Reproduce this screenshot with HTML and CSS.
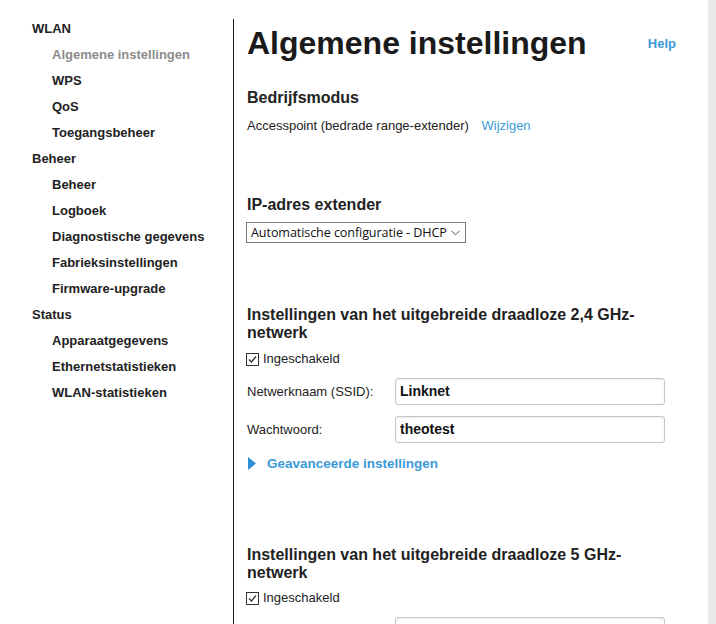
FILE: index.html
```html
<!DOCTYPE html>
<html lang="nl">
<head>
<meta charset="utf-8">
<title>Algemene instellingen</title>
<link rel="stylesheet" href="styles.css">
</head>
<body>
<div class="page">
  <nav class="sidebar">
    <div class="group">WLAN</div>
    <a class="item active">Algemene instellingen</a>
    <a class="item">WPS</a>
    <a class="item">QoS</a>
    <a class="item">Toegangsbeheer</a>
    <div class="group">Beheer</div>
    <a class="item">Beheer</a>
    <a class="item">Logboek</a>
    <a class="item">Diagnostische gegevens</a>
    <a class="item">Fabrieksinstellingen</a>
    <a class="item">Firmware-upgrade</a>
    <div class="group">Status</div>
    <a class="item">Apparaatgegevens</a>
    <a class="item">Ethernetstatistieken</a>
    <a class="item">WLAN-statistieken</a>
  </nav>
  <main class="main">
    <div class="content">
      <div class="title-row">
        <h1 class="title">Algemene instellingen</h1>
        <a class="help link">Help</a>
      </div>

      <section class="sec-mode">
        <h2 class="heading">Bedrijfsmodus</h2>
        <p class="text">Accesspoint (bedrade range-extender) <a class="link change">Wijzigen</a></p>
      </section>

      <section class="sec-ip">
        <h2 class="heading">IP-adres extender</h2>
        <div class="select">
          <span class="select-text">Automatische configuratie - DHCP</span>
          <svg class="select-arrow" width="9" height="6" viewBox="0 0 9 6"><path d="M0.5 0.8 L4.5 4.8 L8.5 0.8" fill="none" stroke="#555" stroke-width="1"/></svg>
        </div>
      </section>

      <section class="sec-wifi">
        <h2 class="heading wrap">Instellingen van het uitgebreide draadloze 2,4 GHz-netwerk</h2>
        <label class="check-row">
          <span class="checkbox"><svg width="11" height="11" viewBox="0 0 11 11"><path d="M2 5.5 L4.5 8 L9 2.5" fill="none" stroke="#333" stroke-width="1.3"/></svg></span>
          <span class="text">Ingeschakeld</span>
        </label>
        <div class="field">
          <span class="label">Netwerknaam (SSID):</span>
          <div class="input">Linknet</div>
        </div>
        <div class="field">
          <span class="label">Wachtwoord:</span>
          <div class="input">theotest</div>
        </div>
        <div class="advanced">
          <svg class="tri" width="9" height="13" viewBox="0 0 9 13"><path d="M0 0 L8 6.5 L0 13 Z" fill="#2e8ed6"/></svg>
          <a class="link adv-link">Geavanceerde instellingen</a>
        </div>
      </section>

      <section class="sec-wifi5">
        <h2 class="heading wrap">Instellingen van het uitgebreide draadloze 5 GHz-netwerk</h2>
        <label class="check-row">
          <span class="checkbox"><svg width="11" height="11" viewBox="0 0 11 11"><path d="M2 5.5 L4.5 8 L9 2.5" fill="none" stroke="#333" stroke-width="1.3"/></svg></span>
          <span class="text">Ingeschakeld</span>
        </label>
        <div class="field">
          <span class="label"></span>
          <div class="input"></div>
        </div>
      </section>
    </div>
  </main>
</div>
</body>
</html>
```
FILE: styles.css
```css
html {
  background: #e9e9e9;
}
body {
  margin: 0;
  width: 708px;
  min-height: 100vh;
  background: #ffffff;
  font-family: "Liberation Sans", Arial, sans-serif;
  color: #222222;
  overflow: hidden;
}
.page {
  display: flex;
  align-items: flex-start;
  height: 624px;
  overflow: hidden;
}
.sidebar {
  width: 233px;
  flex: none;
  padding-top: 16px;
  display: flex;
  flex-direction: column;
}
.group,
.item {
  font-size: 13px;
  font-weight: bold;
  line-height: 26px;
  color: #222222;
}
.group {
  padding-left: 32px;
}
.item {
  padding-left: 52px;
}
.item.active {
  color: #8c8c8c;
}
.main {
  margin-top: 19px;
  border-left: 1px solid #1a1a1a;
  padding-left: 13px;
  min-height: 700px;
  flex: 1;
}
.content {
  width: 430px;
}
.title-row {
  display: flex;
  align-items: center;
  height: 48px;
}
.title {
  margin: 0;
  font-size: 32px;
  font-weight: bold;
  line-height: 48px;
  color: #1a1a1a;
}
.link {
  color: #3c9ad8;
  text-decoration: none;
}
.help {
  margin-left: auto;
  margin-right: 1px;
  font-size: 13px;
  font-weight: bold;
}
.heading {
  margin: 0;
  font-size: 16px;
  font-weight: bold;
  line-height: 20px;
  color: #222222;
}
.heading.wrap {
  line-height: 18px;
  width: 400px;
}
.text {
  margin: 0;
  font-size: 13px;
  line-height: 18px;
  color: #222222;
}
.sec-mode {
  margin-top: 21px;
}
.sec-mode .text {
  margin-top: 9px;
}
.change {
  margin-left: 9px;
}
.sec-ip {
  margin-top: 60px;
}
.select {
  margin-top: 7px;
  margin-left: -1px;
  width: 214px;
  height: 19px;
  border: 1px solid #7a7a7a;
  display: flex;
  align-items: center;
  padding-left: 4px;
  box-sizing: content-box;
}
.select-text {
  font-family: "Open Sans", "Noto Sans", sans-serif;
  font-size: 12.6px;
  color: #111111;
  letter-spacing: -0.1px;
}
.select-arrow {
  margin-left: auto;
  margin-right: 5px;
}
.sec-wifi {
  margin-top: 63px;
}
.check-row {
  display: flex;
  align-items: center;
  margin-top: 8px;
  height: 18px;
}
.checkbox {
  width: 11px;
  height: 11px;
  border: 1px solid #333333;
  display: flex;
  align-items: center;
  justify-content: center;
  margin-left: -1px;
  margin-right: 4px;
  background: #fff;
}
.checkbox svg {
  display: block;
}
.field {
  display: flex;
  align-items: center;
  margin-top: 11px;
}
.sec-wifi .check-row + .field {
  margin-top: 10px;
}
.label {
  width: 148px;
  font-size: 13px;
  color: #222222;
}
.input {
  width: 260px;
  height: 25px;
  border: 1px solid #c6c6c6;
  border-radius: 3px;
  box-shadow: inset 0 1px 2px rgba(0, 0, 0, 0.08);
  padding: 0 4px;
  font-size: 14px;
  font-weight: bold;
  line-height: 25px;
  color: #111111;
  background: #fff;
}
.advanced {
  display: flex;
  align-items: center;
  margin-top: 11px;
  height: 18px;
}
.tri {
  margin-left: 1px;
}
.adv-link {
  margin-left: 10px;
  font-size: 13.5px;
  font-weight: bold;
}
.sec-wifi5 {
  margin-top: 74px;
}
.sec-wifi5 .check-row {
  margin-top: 7px;
}
.sec-wifi5 .field {
  margin-top: 10px;
}
```
